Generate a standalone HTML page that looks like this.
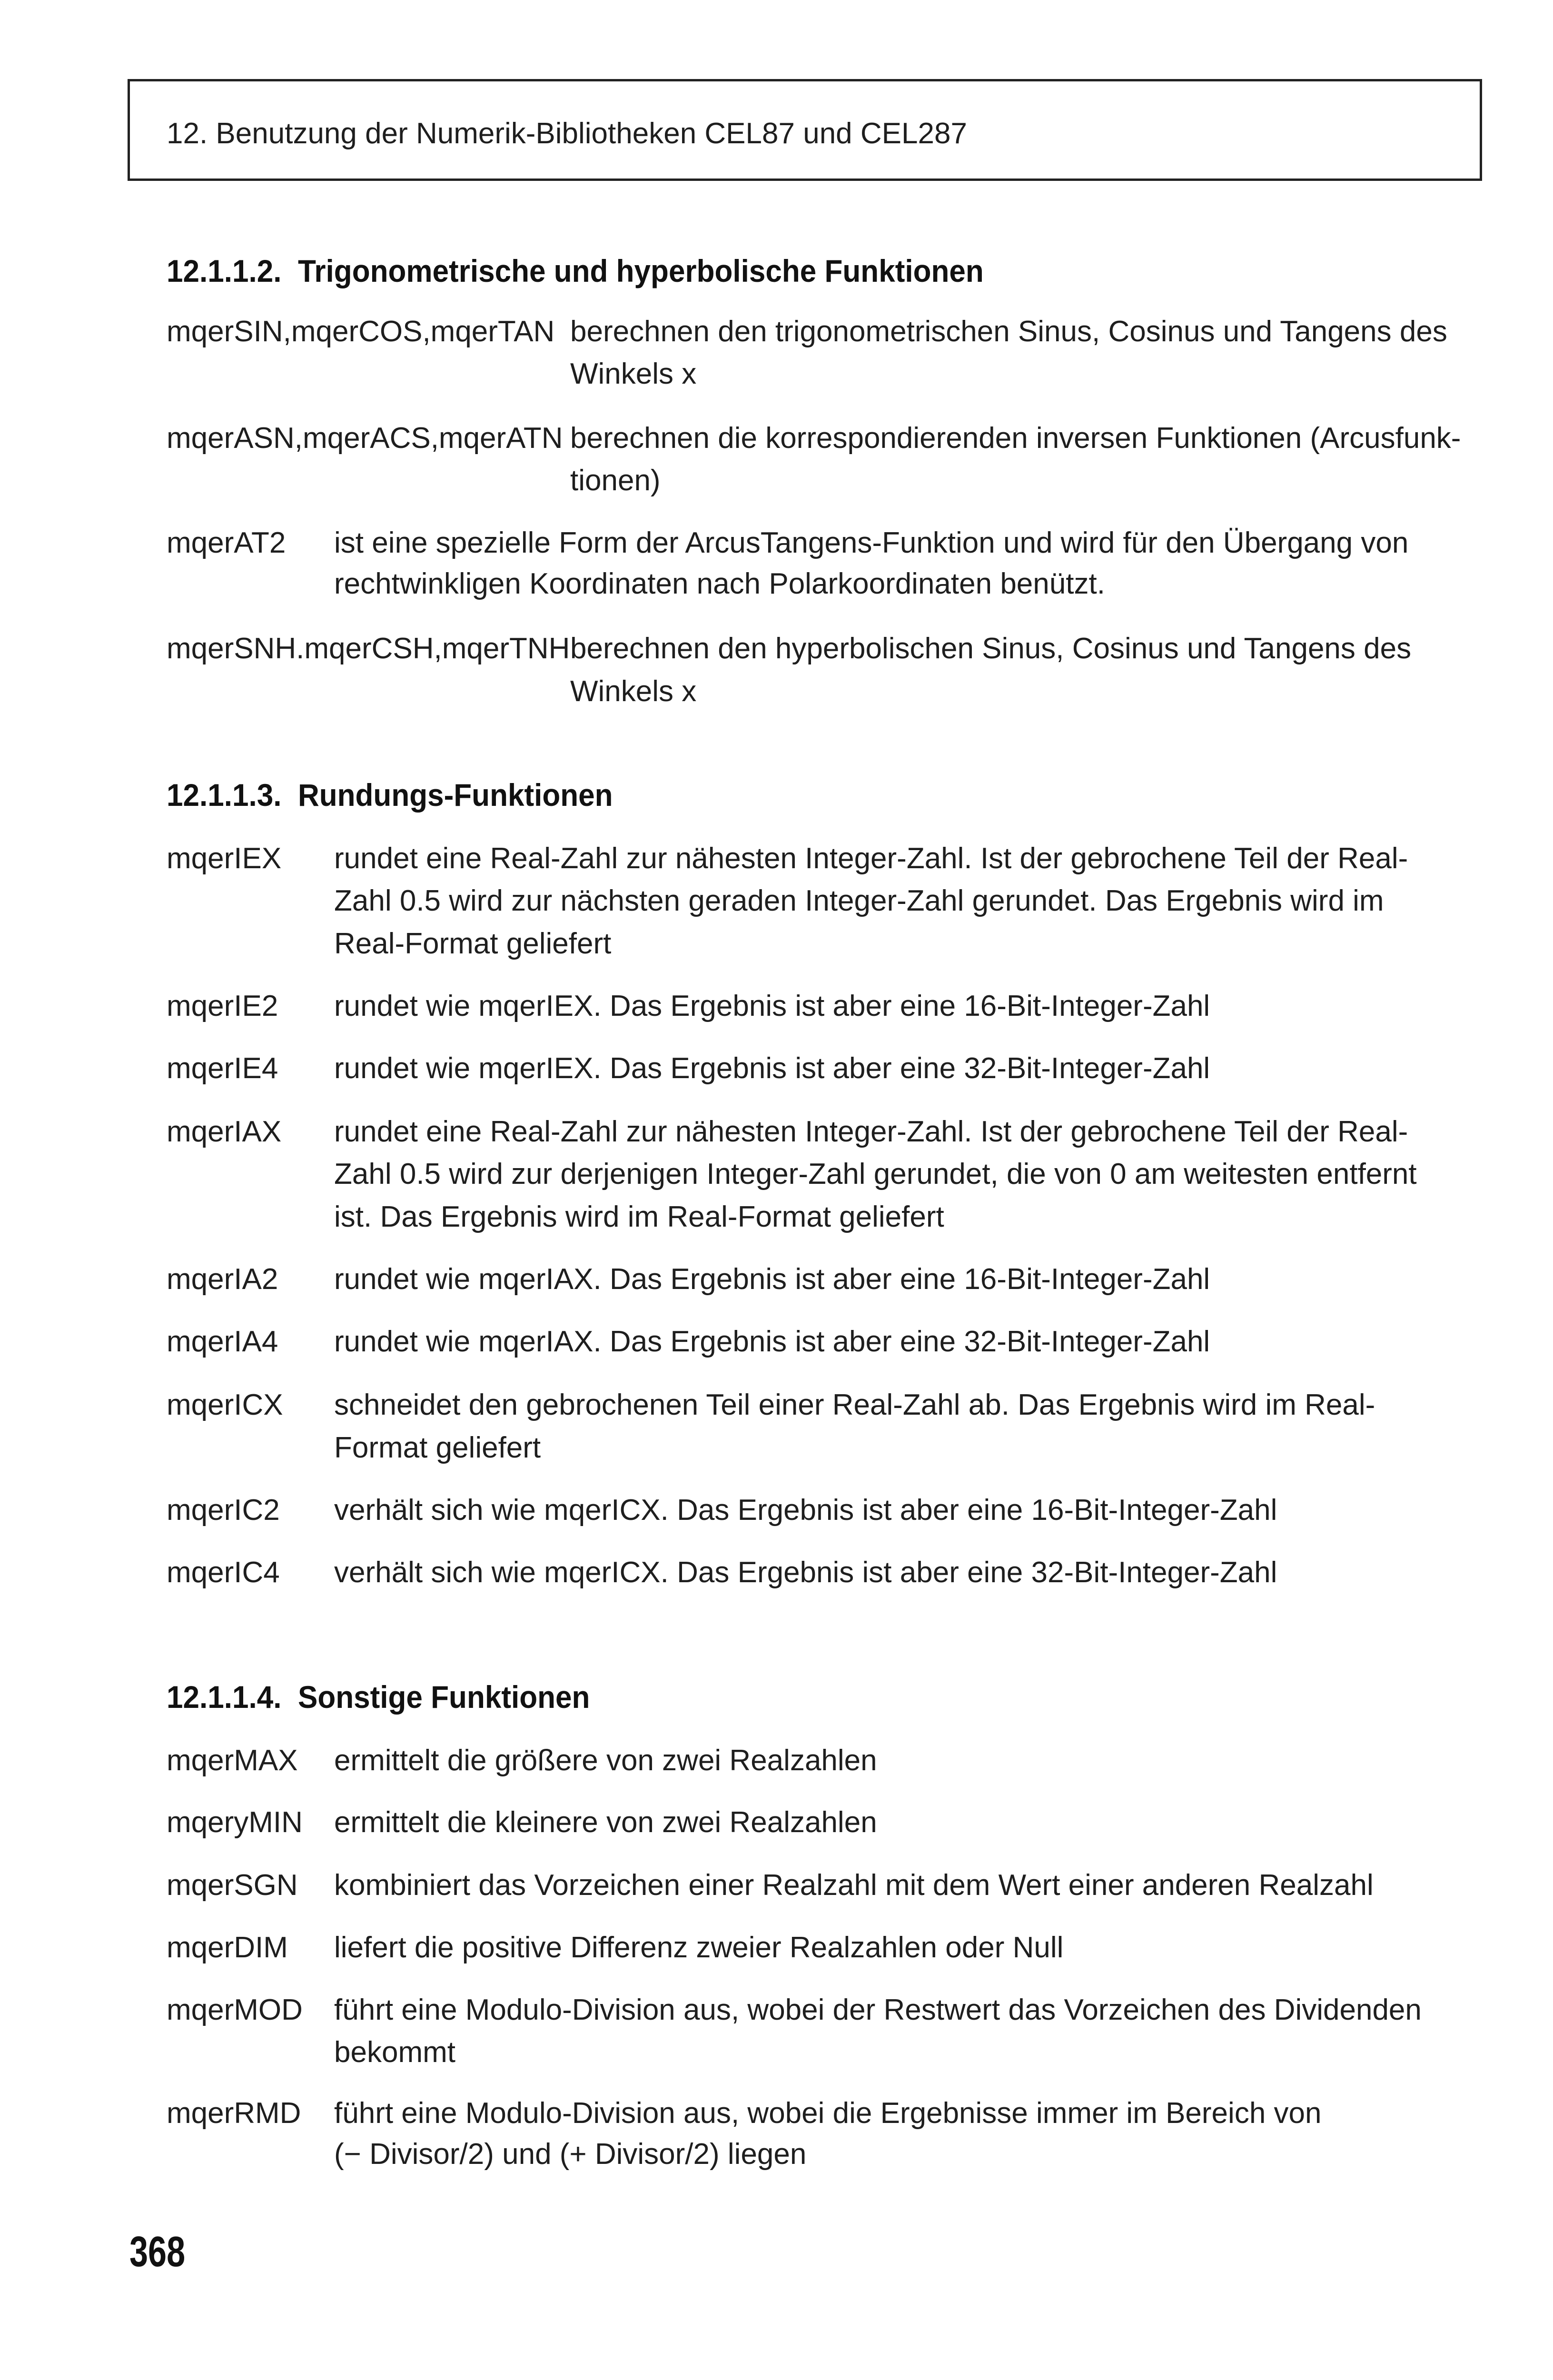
<!DOCTYPE html>
<html><head><meta charset="utf-8">
<style>
html,body{margin:0;padding:0;background:#fff;}
body{width:3263px;height:5051px;position:relative;overflow:hidden;font-family:"Liberation Sans",sans-serif;color:#1e1e1e;}
.box{position:absolute;left:268px;top:166px;width:2846px;height:214px;border:5px solid #222;box-sizing:border-box;}
.l{position:absolute;font-size:62px;line-height:62px;white-space:nowrap;}
.h{position:absolute;font-size:66px;line-height:62px;font-weight:bold;white-space:nowrap;transform:scaleX(0.94);transform-origin:left top;color:#111;}
.hd{position:absolute;left:350px;top:250px;font-size:62px;line-height:62px;white-space:nowrap;}
.pn{position:absolute;left:272px;top:4687px;font-size:90px;line-height:88px;font-weight:bold;transform:scaleX(0.78);transform-origin:left top;color:#111;}
</style></head><body>
<div class="box"></div>
<div class="hd">12. Benutzung der Numerik-Bibliotheken CEL87 und CEL287</div>

<div class="h" style="left:350px;top:538px">12.1.1.2.&nbsp; Trigonometrische und hyperbolische Funktionen</div>
<div class="l" style="left:350px;top:666px">mqerSIN,mqerCOS,mqerTAN</div>
<div class="l" style="left:1198px;top:666px">berechnen den trigonometrischen Sinus, Cosinus und Tangens des</div>
<div class="l" style="left:1198px;top:755px">Winkels x</div>
<div class="l" style="left:350px;top:890px">mqerASN,mqerACS,mqerATN</div>
<div class="l" style="left:1198px;top:890px">berechnen die korrespondierenden inversen Funktionen (Arcusfunk-</div>
<div class="l" style="left:1198px;top:979px">tionen)</div>
<div class="l" style="left:350px;top:1110px">mqerAT2</div>
<div class="l" style="left:702px;top:1110px">ist eine spezielle Form der ArcusTangens-Funktion und wird für den Übergang von</div>
<div class="l" style="left:702px;top:1196px">rechtwinkligen Koordinaten nach Polarkoordinaten benützt.</div>
<div class="l" style="left:350px;top:1332px">mqerSNH.mqerCSH,mqerTNH</div>
<div class="l" style="left:1198px;top:1332px">berechnen den hyperbolischen Sinus, Cosinus und Tangens des</div>
<div class="l" style="left:1198px;top:1422px">Winkels x</div>

<div class="h" style="left:350px;top:1639px">12.1.1.3.&nbsp; Rundungs-Funktionen</div>
<div class="l" style="left:350px;top:1773px">mqerIEX</div>
<div class="l" style="left:702px;top:1773px">rundet eine Real-Zahl zur nähesten Integer-Zahl. Ist der gebrochene Teil der Real-</div>
<div class="l" style="left:702px;top:1862px">Zahl 0.5 wird zur nächsten geraden Integer-Zahl gerundet. Das Ergebnis wird im</div>
<div class="l" style="left:702px;top:1952px">Real-Format geliefert</div>
<div class="l" style="left:350px;top:2083px">mqerIE2</div>
<div class="l" style="left:702px;top:2083px">rundet wie mqerIEX. Das Ergebnis ist aber eine 16-Bit-Integer-Zahl</div>
<div class="l" style="left:350px;top:2214px">mqerIE4</div>
<div class="l" style="left:702px;top:2214px">rundet wie mqerIEX. Das Ergebnis ist aber eine 32-Bit-Integer-Zahl</div>
<div class="l" style="left:350px;top:2347px">mqerIAX</div>
<div class="l" style="left:702px;top:2347px">rundet eine Real-Zahl zur nähesten Integer-Zahl. Ist der gebrochene Teil der Real-</div>
<div class="l" style="left:702px;top:2436px">Zahl 0.5 wird zur derjenigen Integer-Zahl gerundet, die von 0 am weitesten entfernt</div>
<div class="l" style="left:702px;top:2526px">ist. Das Ergebnis wird im Real-Format geliefert</div>
<div class="l" style="left:350px;top:2657px">mqerIA2</div>
<div class="l" style="left:702px;top:2657px">rundet wie mqerIAX. Das Ergebnis ist aber eine 16-Bit-Integer-Zahl</div>
<div class="l" style="left:350px;top:2788px">mqerIA4</div>
<div class="l" style="left:702px;top:2788px">rundet wie mqerIAX. Das Ergebnis ist aber eine 32-Bit-Integer-Zahl</div>
<div class="l" style="left:350px;top:2921px">mqerICX</div>
<div class="l" style="left:702px;top:2921px">schneidet den gebrochenen Teil einer Real-Zahl ab. Das Ergebnis wird im Real-</div>
<div class="l" style="left:702px;top:3011px">Format geliefert</div>
<div class="l" style="left:350px;top:3142px">mqerIC2</div>
<div class="l" style="left:702px;top:3142px">verhält sich wie mqerICX. Das Ergebnis ist aber eine 16-Bit-Integer-Zahl</div>
<div class="l" style="left:350px;top:3273px">mqerIC4</div>
<div class="l" style="left:702px;top:3273px">verhält sich wie mqerICX. Das Ergebnis ist aber eine 32-Bit-Integer-Zahl</div>

<div class="h" style="left:350px;top:3534px">12.1.1.4.&nbsp; Sonstige Funktionen</div>
<div class="l" style="left:350px;top:3668px">mqerMAX</div>
<div class="l" style="left:702px;top:3668px">ermittelt die größere von zwei Realzahlen</div>
<div class="l" style="left:350px;top:3798px">mqeryMIN</div>
<div class="l" style="left:702px;top:3798px">ermittelt die kleinere von zwei Realzahlen</div>
<div class="l" style="left:350px;top:3930px">mqerSGN</div>
<div class="l" style="left:702px;top:3930px">kombiniert das Vorzeichen einer Realzahl mit dem Wert einer anderen Realzahl</div>
<div class="l" style="left:350px;top:4061px">mqerDIM</div>
<div class="l" style="left:702px;top:4061px">liefert die positive Differenz zweier Realzahlen oder Null</div>
<div class="l" style="left:350px;top:4192px">mqerMOD</div>
<div class="l" style="left:702px;top:4192px">führt eine Modulo-Division aus, wobei der Restwert das Vorzeichen des Dividenden</div>
<div class="l" style="left:702px;top:4281px">bekommt</div>
<div class="l" style="left:350px;top:4409px">mqerRMD</div>
<div class="l" style="left:702px;top:4409px">führt eine Modulo-Division aus, wobei die Ergebnisse immer im Bereich von</div>
<div class="l" style="left:702px;top:4495px">(− Divisor/2) und (+ Divisor/2) liegen</div>

<div class="pn">368</div>
</body></html>
